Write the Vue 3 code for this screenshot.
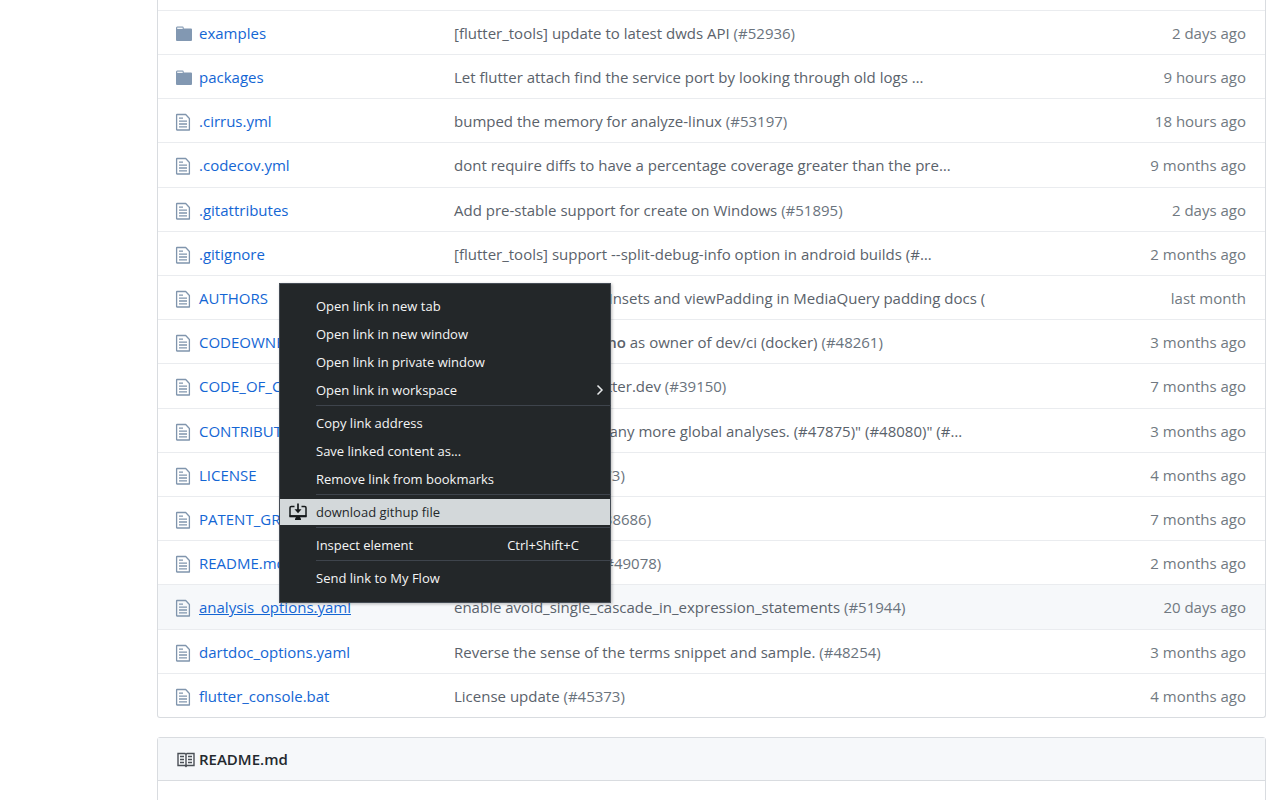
<script setup>
const files = [
  { name: 'examples', dir: true, msg: '[flutter_tools] update to latest dwds API', pr: '(#52936)', age: '2 days ago' },
  { name: 'packages', dir: true, msg: 'Let flutter attach find the service port by looking through old logs …', age: '9 hours ago' },
  { name: '.cirrus.yml', msg: 'bumped the memory for analyze-linux', pr: '(#53197)', age: '18 hours ago' },
  { name: '.codecov.yml', msg: 'dont require diffs to have a percentage coverage greater than the pre…', age: '9 months ago' },
  { name: '.gitattributes', msg: 'Add pre-stable support for create on Windows', pr: '(#51895)', age: '2 days ago' },
  { name: '.gitignore', msg: '[flutter_tools] support --split-debug-info option in android builds (#…', age: '2 months ago' },
  { name: 'AUTHORS', msg: 'Explain that both viewInsets and viewPadding in MediaQuery padding docs (', age: 'last month' },
  { name: 'CODEOWNERS', msg: 'Make', mention: '@franciscojma-no', tail: 'as owner of dev/ci (docker) ', pr: '(#48261)', age: '3 months ago' },
  { name: 'CODE_OF_CONDUCT.md', msg: 'Add new conduct@flutter.dev', pr: '(#39150)', age: '7 months ago' },
  { name: 'CONTRIBUTING.md', msg: 'Revert "Revert "Add many more global analyses. (#47875)" (#48080)" (#…', age: '3 months ago' },
  { name: 'LICENSE', msg: 'License update', pr: '(#45373)', age: '4 months ago' },
  { name: 'PATENT_GRANT', msg: 'Add a PATENTS file', pr: '(#38686)', age: '7 months ago' },
  { name: 'README.md', msg: 'Update the README', pr: '(#49078)', age: '2 months ago' },
  { name: 'analysis_options.yaml', active: true, msg: 'enable avoid_single_cascade_in_expression_statements', pr: '(#51944)', age: '20 days ago' },
  { name: 'dartdoc_options.yaml', msg: 'Reverse the sense of the terms snippet and sample.', pr: '(#48254)', age: '3 months ago' },
  { name: 'flutter_console.bat', msg: 'License update', pr: '(#45373)', age: '4 months ago' },
]

const groups = [
  [
    { label: 'Open link in new tab' },
    { label: 'Open link in new window' },
    { label: 'Open link in private window' },
    { label: 'Open link in workspace', submenu: true },
  ],
  [
    { label: 'Copy link address' },
    { label: 'Save linked content as...' },
    { label: 'Remove link from bookmarks' },
  ],
  [{ label: 'download githup file', download: true }],
  [{ label: 'Inspect element', keys: 'Ctrl+Shift+C' }],
  [{ label: 'Send link to My Flow' }],
]
</script>

<template>
  <main class="page">
    <section class="box files">
      <table class="list">
        <tbody>
          <tr v-for="f in files" :key="f.name" :class="{ active: f.active }">
            <td class="icon">
              <svg v-if="f.dir" width="18" height="18" viewBox="0 0 18 18" aria-hidden="true">
                <path d="M1 3Q1 1.500 2.200 1.500H7.500Q8.700 1.500 8.700 2.700V3.500H16Q17 3.500 17 4.500V15Q17 16 16 16H2Q1 16 1 15Z" fill="#8298b2" />
                <path d="M2.200 2.600H7.700V4H2.200Z" fill="#f1f4f7" />
              </svg>
              <svg v-else width="18" height="20" viewBox="0 0 18 20" fill="none" stroke="#8095ad" aria-hidden="true">
                <path d="M2 2.500H10.700L14.400 6.500V18H2Q1.600 18 1.600 17.600V2.900Q1.600 2.500 2 2.500Z" stroke-width="1.300" stroke-linejoin="round" />
                <path d="M4 6.200H8M4 9.200H12M4 12H12M4 14.800H12" stroke-width="1.300" />
              </svg>
            </td>
            <td class="name"><a href="#">{{ f.name }}</a></td>
            <td class="msg">
              {{ f.msg }}
              <template v-if="f.mention"><b>{{ f.mention }}</b> {{ f.tail }}</template>
              <span v-if="f.pr" class="pr">{{ f.pr }}</span>
            </td>
            <td class="age">{{ f.age }}</td>
          </tr>
        </tbody>
      </table>

      <div class="menu" role="menu">
        <template v-for="(group, i) in groups" :key="i">
          <hr v-if="i" />
          <button
            v-for="item in group"
            :key="item.label"
            type="button"
            role="menuitem"
            :class="{ current: item.download }"
          >
            <svg v-if="item.download" class="lead" width="20" height="18" viewBox="0 0 20 18" fill="none" stroke="#15191b" aria-hidden="true">
              <path d="M6.500 3.500H3.300Q2 3.500 2 4.800V13H18V4.800Q18 3.500 16.700 3.500H13.500" stroke-width="1.500" />
              <path d="M1.500 13.300H18.500" stroke-width="2" />
              <path d="M10 0.500V8" stroke-width="1.700" />
              <path d="M6.500 6.300H13.500L10 10.300Z" fill="#15191b" stroke="none" />
              <path d="M8 14H12L13 16V17H7V16Z" fill="#15191b" stroke="none" />
            </svg>
            <span>{{ item.label }}</span>
            <kbd v-if="item.keys">{{ item.keys }}</kbd>
            <svg v-if="item.submenu" class="more" width="8" height="12" viewBox="0 0 8 12" fill="none" stroke="#e8eaeb" stroke-width="1.500" aria-hidden="true">
              <path d="M1.500 1.500L6 6L1.500 10.500" />
            </svg>
          </button>
        </template>
      </div>
    </section>

    <section class="box readme">
      <h2>
        <svg width="18" height="16" viewBox="0 0 18 16" fill="none" stroke="#4a4f55" aria-hidden="true">
          <path d="M9 2.500L8 1.500H1V13.500H8L9 14.500L10 13.500H17V1.500H10ZM9 2.500V14" stroke-width="1.400" />
          <path d="M3 4.500H7M3 7.500H7M3 10.500H7M11 4.500H15M11 7.500H15M11 10.500H15" stroke-width="1.600" />
        </svg>
        README.md
      </h2>
    </section>
  </main>
</template>

<style>
body {
  margin: 0;
  background: #fff;
}
</style>

<style scoped>
.page {
  height: 100vh;
  overflow: hidden;
  box-sizing: border-box;
  padding: 0 14px 0 157px;
  font-family: "Open Sans", "Noto Sans", sans-serif;
  font-size: 15px;
  line-height: 21px;
  color: #24292e;
}
.box {
  border: 1px solid #d9dce0;
  border-radius: 3px;
}
.files {
  position: relative;
  border-top: 0;
  border-radius: 0 0 3px 3px;
  padding-top: 10px;
}
.list {
  width: 100%;
  table-layout: fixed;
  border-collapse: separate;
  border-spacing: 0;
}
td {
  padding: 12px 0 10px;
  border-top: 1px solid #eaecef;
  white-space: nowrap;
}
tr:nth-child(5n + 4) td {
  padding-bottom: 11px;
}
.icon {
  width: 41px;
}
.icon svg {
  display: block;
  margin-left: 17px;
}
.name {
  width: 255px;
}
.name a {
  color: #1466d4;
  text-decoration: none;
}
.active td {
  background: #f6f8fa;
}
.active a {
  text-decoration: underline;
}
.msg {
  color: #5a626b;
}
.msg b {
  font-weight: 600;
}
.pr {
  color: #6a737d;
}
.age {
  width: 140px;
  padding-right: 19px;
  text-align: right;
  color: #717981;
}
.menu {
  position: absolute;
  top: 283px;
  left: 121px;
  width: 332px;
  box-sizing: border-box;
  display: flex;
  flex-direction: column;
  gap: 2px;
  padding: 9px 0 11px;
  border: 1px solid #454c55;
  background: #232729;
  box-shadow: 1px 1px 3px #0004;
}
.menu button {
  position: relative;
  display: flex;
  align-items: center;
  height: 26px;
  padding: 0 31px 0 36px;
  border: 0;
  background: none;
  color: #f4f5f5;
  font: inherit;
  font-size: 13px;
  text-align: left;
  white-space: nowrap;
}
.menu .current {
  background: #d3d8da;
  color: #24282a;
}
.menu hr {
  width: 295px;
  margin: 0 0 2px 36px;
  border: 0;
  border-top: 1px solid #3e444c;
}
.menu kbd {
  margin-left: auto;
  font: inherit;
}
.lead {
  position: absolute;
  left: 8px;
}
.more {
  position: absolute;
  right: 6px;
}
.readme {
  height: 100px;
  margin-top: 19px;
}
.readme h2 {
  display: flex;
  align-items: center;
  gap: 4px;
  margin: 0;
  padding: 11px 19px 10px;
  border-bottom: 1px solid #d9dce0;
  background: #f6f8fa;
  font-size: 15px;
  font-weight: 600;
}
</style>
